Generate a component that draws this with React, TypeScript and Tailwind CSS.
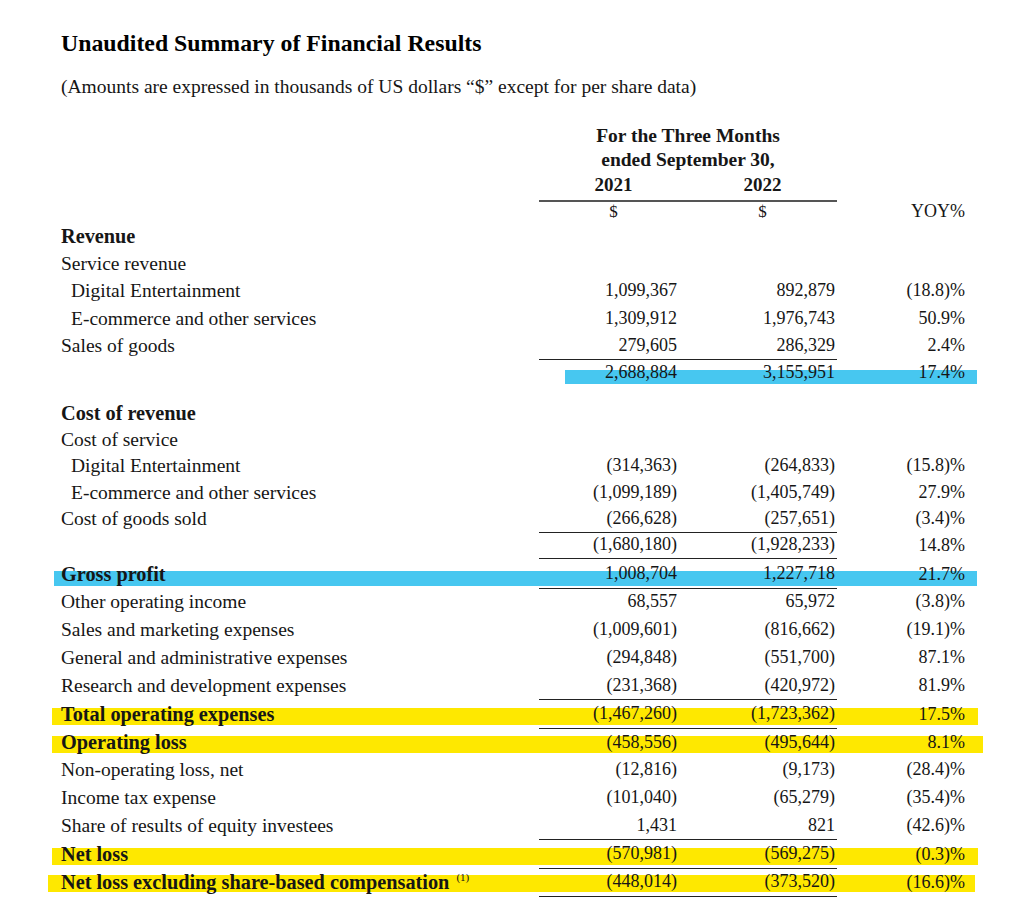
import React from "react";

type HL = { color: string; cls: string };
type Row = {
  label?: string;
  indent?: boolean;
  bold?: boolean;
  sup?: string;
  v1?: string;
  v2?: string;
  v3?: string;
  h: string;
  line?: boolean;
  hl?: HL;
};

const CYAN = "bg-[#47c7f0]";
const YEL = "bg-[#fee800]";

const rows: Row[] = [
  { label: "Revenue", bold: true, h: "h-[27.5px]" },
  { label: "Service revenue", h: "h-[27.5px]" },
  { label: "Digital Entertainment", indent: true, v1: "1,099,367", v2: "892,879", v3: "(18.8)%", h: "h-[27.5px]" },
  { label: "E-commerce and other services", indent: true, v1: "1,309,912", v2: "1,976,743", v3: "50.9%", h: "h-[27.5px]" },
  { label: "Sales of goods", v1: "279,605", v2: "286,329", v3: "2.4%", h: "h-[27.5px]", line: true },
  {
    v1: "2,688,884",
    v2: "3,155,951",
    v3: "17.4%",
    h: "h-[28px]",
    hl: { color: CYAN, cls: "top-[11.5px] h-[14px] left-[504px] right-0" },
  },
  { h: "h-[11.5px]" },
  { label: "Cost of revenue", bold: true, h: "h-[26.5px]" },
  { label: "Cost of service", h: "h-[26.5px]" },
  { label: "Digital Entertainment", indent: true, v1: "(314,363)", v2: "(264,833)", v3: "(15.8)%", h: "h-[26.5px]" },
  { label: "E-commerce and other services", indent: true, v1: "(1,099,189)", v2: "(1,405,749)", v3: "27.9%", h: "h-[26.5px]" },
  { label: "Cost of goods sold", v1: "(266,628)", v2: "(257,651)", v3: "(3.4)%", h: "h-[27px]", line: true },
  { v1: "(1,680,180)", v2: "(1,928,233)", v3: "14.8%", h: "h-[28px]", line: true },
  {
    label: "Gross profit",
    bold: true,
    v1: "1,008,704",
    v2: "1,227,718",
    v3: "21.7%",
    h: "h-[28px]",
    line: true,
    hl: { color: CYAN, cls: "top-[12px] h-[15px] left-[-7px] right-0" },
  },
  { label: "Other operating income", v1: "68,557", v2: "65,972", v3: "(3.8)%", h: "h-[28px]" },
  { label: "Sales and marketing expenses", v1: "(1,009,601)", v2: "(816,662)", v3: "(19.1)%", h: "h-[28px]" },
  { label: "General and administrative expenses", v1: "(294,848)", v2: "(551,700)", v3: "87.1%", h: "h-[28px]" },
  { label: "Research and development expenses", v1: "(231,368)", v2: "(420,972)", v3: "81.9%", h: "h-[28px]", line: true },
  {
    label: "Total operating expenses",
    bold: true,
    v1: "(1,467,260)",
    v2: "(1,723,362)",
    v3: "17.5%",
    h: "h-[28px]",
    line: true,
    hl: { color: YEL, cls: "top-[9px] h-[17px] left-[-9px] right-[-1px]" },
  },
  {
    label: "Operating loss",
    bold: true,
    v1: "(458,556)",
    v2: "(495,644)",
    v3: "8.1%",
    h: "h-[28px]",
    hl: { color: YEL, cls: "top-[9px] h-[17px] left-[-9px] right-[-6px]" },
  },
  { label: "Non-operating loss, net", v1: "(12,816)", v2: "(9,173)", v3: "(28.4)%", h: "h-[28px]" },
  { label: "Income tax expense", v1: "(101,040)", v2: "(65,279)", v3: "(35.4)%", h: "h-[28px]" },
  { label: "Share of results of equity investees", v1: "1,431", v2: "821", v3: "(42.6)%", h: "h-[28px]", line: true },
  {
    label: "Net loss",
    bold: true,
    v1: "(570,981)",
    v2: "(569,275)",
    v3: "(0.3)%",
    h: "h-[28px]",
    line: true,
    hl: { color: YEL, cls: "top-[9px] h-[17px] left-[-9px] right-[-1px]" },
  },
  {
    label: "Net loss excluding share-based compensation",
    sup: "(1)",
    bold: true,
    v1: "(448,014)",
    v2: "(373,520)",
    v3: "(16.6)%",
    h: "h-[28px]",
    line: true,
    hl: { color: YEL, cls: "top-[8px] h-[17px] left-[-13px] right-[2px]" },
  },
];

const GRID = "grid grid-cols-[478px_149px_149px_140px]";

function TableRow({ r }: { r: Row }) {
  const border = r.line ? "border-b border-[#222]" : "";
  return (
    <div className={`relative ${GRID} ${r.h}`}>
      {r.hl && <div className={`absolute ${r.hl.color} ${r.hl.cls}`} />}
      <div
        className={`relative flex items-center whitespace-nowrap ${r.indent ? "pl-[10px]" : ""} ${
          r.bold ? "font-bold text-[20.3px]" : "text-[19.5px]"
        }`}
      >
        {r.label}
        {r.sup && <span className="ml-[7px] text-[11px] font-normal -translate-y-[5px]">{r.sup}</span>}
      </div>
      <div className={`relative flex items-center justify-end pr-[11px] text-[18px] ${border}`}>{r.v1}</div>
      <div className={`relative flex items-center justify-end pr-[2px] text-[18px] ${border}`}>{r.v2}</div>
      <div className="relative flex items-center justify-end pr-[12px] text-[18px]">{r.v3}</div>
    </div>
  );
}

export default function App() {
  return (
    <div
      className="min-h-[900px] w-[1024px] bg-white text-[#161616]"
      style={{ fontFamily: '"Liberation Serif", "Times New Roman", serif' }}
    >
      <div className="ml-[61px] w-[916px] pt-[30px]">
        <div className="flex h-[28px] items-center text-[23.8px] font-bold text-black">
          Unaudited Summary of Financial Results
        </div>
        <div className="mt-[17px] flex h-[24px] items-center text-[19.5px]">
          (Amounts are expressed in thousands of US dollars “$” except for per share data)
        </div>

        <div className={`mt-[25px] ${GRID}`}>
          <div />
          <div className="col-span-2 flex flex-col text-[19.5px] font-bold">
            <div className="flex h-[24px] items-center justify-center">For the Three Months</div>
            <div className="flex h-[23px] items-center justify-center">ended September 30,</div>
          </div>
          <div />
        </div>
        <div className={`${GRID} h-[27px]`}>
          <div />
          <div className="flex items-center justify-center border-b-2 border-[#555] text-[19px] font-bold">2021</div>
          <div className="flex items-center justify-center border-b-2 border-[#555] text-[19px] font-bold">2022</div>
          <div />
        </div>
        <div className={`${GRID} h-[23px]`}>
          <div />
          <div className="flex items-center justify-center text-[17px]">$</div>
          <div className="flex items-center justify-center text-[17px]">$</div>
          <div className="flex items-center justify-end pr-[12px] text-[18px]">YOY%</div>
        </div>

        {rows.map((r, i) => (
          <TableRow key={i} r={r} />
        ))}
      </div>
    </div>
  );
}
